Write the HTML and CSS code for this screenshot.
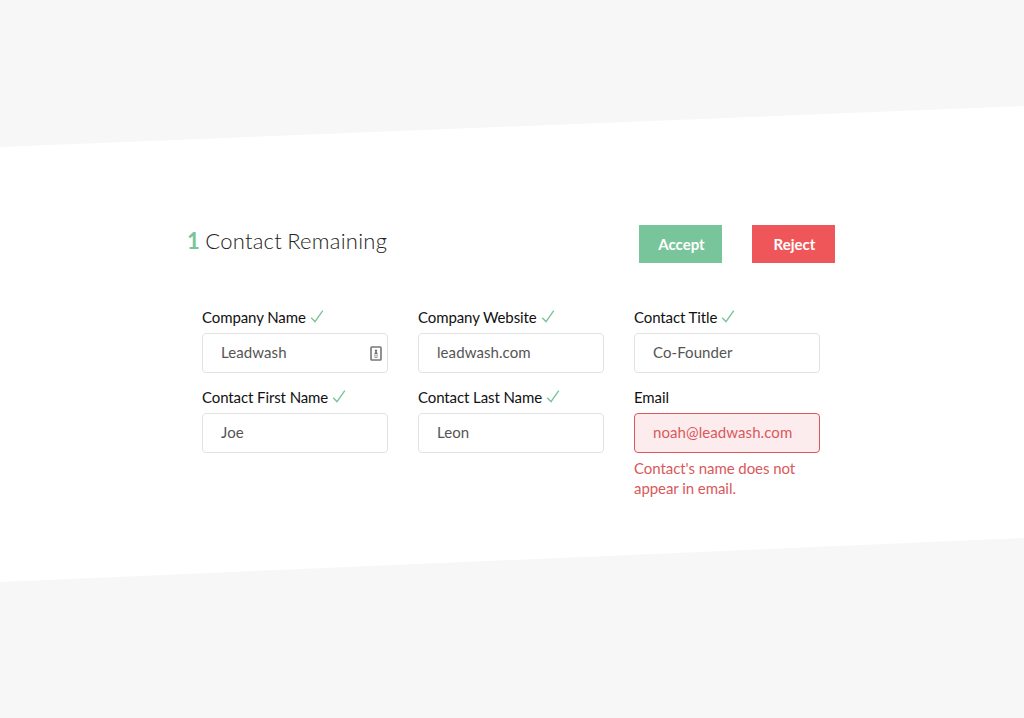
FILE: index.html
```html
<!DOCTYPE html>
<html lang="en">
<head>
    <meta charset="UTF-8">
    <meta name="viewport" content="width=device-width, initial-scale=1.0">
    <title>Contact Remaining</title>
    <link rel="stylesheet" href="styles.css">
</head>
<body>

<section class="band">
    <div class="top">
        <h1><span class="count">1</span> Contact Remaining</h1>
        <div class="actions">
            <button type="button" class="btn accept">Accept</button>
            <button type="button" class="btn reject">Reject</button>
        </div>
    </div>

    <form class="contact">
        <div class="field">
            <label for="company"><span class="text">Company Name</span>
                <svg class="check" viewBox="0 0 14 14"><path d="M1.2 7.8 L5 11.6 L12.8 0.6"/></svg>
            </label>
            <div class="input-wrap">
                <input type="text" id="company" value="Leadwash">
                <svg class="autofill" viewBox="0 0 12 15">
                    <rect class="frame" x="1" y="1" width="10" height="13" rx="0.8"/>
                    <circle cx="6" cy="4.8" r="1.2"/>
                    <path d="M4 8.2 L5.2 6 H6.8 L8 8.2 Z"/>
                    <path d="M3.8 9.4 H8.2 V10.3 H3.8 Z M4.5 11 H7.5 V11.7 H4.5 Z"/>
                </svg>
            </div>
        </div>
        <div class="field">
            <label for="website"><span class="text">Company Website</span>
                <svg class="check" viewBox="0 0 14 14"><path d="M1.2 7.8 L5 11.6 L12.8 0.6"/></svg>
            </label>
            <input type="text" id="website" value="leadwash.com">
        </div>
        <div class="field">
            <label for="title"><span class="text">Contact Title</span>
                <svg class="check" viewBox="0 0 14 14"><path d="M1.2 7.8 L5 11.6 L12.8 0.6"/></svg>
            </label>
            <input type="text" id="title" value="Co-Founder">
        </div>
        <div class="field">
            <label for="first"><span class="text">Contact First Name</span>
                <svg class="check" viewBox="0 0 14 14"><path d="M1.2 7.8 L5 11.6 L12.8 0.6"/></svg>
            </label>
            <input type="text" id="first" value="Joe">
        </div>
        <div class="field">
            <label for="last"><span class="text">Contact Last Name</span>
                <svg class="check" viewBox="0 0 14 14"><path d="M1.2 7.8 L5 11.6 L12.8 0.6"/></svg>
            </label>
            <input type="text" id="last" value="Leon">
        </div>
        <div class="field error">
            <label for="email"><span class="text">Email</span></label>
            <input type="text" id="email" value="noah@leadwash.com">
            <p>Contact's name does not appear in email.</p>
        </div>
    </form>
</section>

</body>
</html>
```
FILE: styles.css
```css
* {
    box-sizing: border-box;
}

body {
    margin: 0;
    padding-top: 106px;
    height: 718px;
    background-color: #f7f7f7;
    font-family: Lato, "Open Sans", sans-serif;
    font-size: 15px;
    overflow: hidden;
}

/* slanted white band */
.band {
    height: 476px;
    padding: 119px 188px 0;
    background-color: white;
    clip-path: polygon(0 41px, 100% 0, 100% 432px, 0 100%);
}

.top {
    display: flex;
    justify-content: space-between;
    height: 38px;
    margin-right: 1px;
}

h1 {
    margin: 0 0 0 -1px;
    font-size: 22px;
    font-weight: 300;
    line-height: 31px;
    letter-spacing: 0.25px;
    word-spacing: -1px;
    color: #222;
}

.count {
    font-weight: bold;
    color: #79c59b;
}

.actions {
    display: flex;
    gap: 30px;
}

.btn {
    width: 83px;
    height: 38px;
    padding: 0 0 0 2px;
    border: none;
    color: white;
    font-family: inherit;
    font-size: 15px;
    font-weight: bold;
    cursor: pointer;
}

.accept {
    background-color: #79c59b;
}

.reject {
    background-color: #ef5659;
}

.contact {
    display: grid;
    grid-template-columns: repeat(3, 186px);
    column-gap: 30px;
    margin: 45px 0 0 14px;
}

.field {
    min-height: 80px;
}

label {
    display: flex;
    align-items: center;
    gap: 4px;
    height: 25px;
    padding-bottom: 7px;
    color: #111;
    letter-spacing: -0.1px;
}

.check {
    width: 14px;
    height: 14px;
    fill: none;
    stroke: #79c59b;
    stroke-width: 1.4;
}

.input-wrap {
    position: relative;
}

input {
    display: block;
    width: 186px;
    height: 40px;
    padding: 0 18px 2px;
    border: 1px solid #e2e2e2;
    border-radius: 4px;
    background-color: white;
    color: #555;
    font-family: inherit;
    font-size: 15px;
    letter-spacing: 0.08px;
}

.autofill {
    position: absolute;
    top: 13px;
    right: 6px;
    width: 12px;
    height: 15px;
    fill: #777;
}

.autofill .frame {
    fill: none;
    stroke: #777;
    stroke-width: 1.6;
}

.error input {
    border-color: #d9595b;
    background-color: #fdecee;
    color: #d9595b;
}

.error p {
    margin: 5px 0 0;
    line-height: 20px;
    letter-spacing: -0.06px;
    color: #d9595b;
}
```
